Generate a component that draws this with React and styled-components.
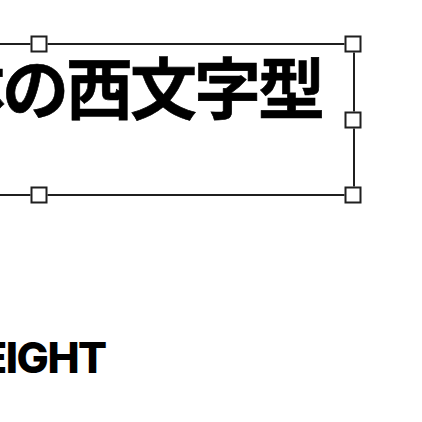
import React from "react";
import styled, { createGlobalStyle } from "styled-components";

const GlobalStyle = createGlobalStyle`
  html, body {
    margin: 0;
    padding: 0;
    background: #ffffff;
    overflow: hidden;
  }
`;

const Page = styled.div`
  width: 422px;
  height: 422px;
  overflow: hidden;
  display: flex;
  flex-direction: column;
  align-items: flex-start;
  padding-top: 43px;
  box-sizing: border-box;
`;

const Frame = styled.div`
  position: relative;
  flex-shrink: 0;
  box-sizing: border-box;
  width: 632px;
  height: 153px;
  margin-left: -277px;
  border: 2px solid #1f1f1f;
  display: flex;
  justify-content: flex-end;
  align-items: flex-start;
  padding: 6px 31px 0 0;
`;

const Handle = styled.span`
  position: absolute;
  width: 13px;
  height: 13px;
  background: #ffffff;
  border: 2px solid #1f1f1f;
  left: ${({ $x }) => $x};
  top: ${({ $y }) => $y};
  transform: translate(-50%, -50%);
`;

const Sample = styled.div`
  font-family: "Noto Sans CJK JP", "Noto Sans", sans-serif;
  font-weight: 700;
  font-size: 67px;
  letter-spacing: -3px;
  line-height: 1;
  color: #000000;
  white-space: nowrap;
  -webkit-text-stroke: 0.6px #000000;
`;

const Caption = styled.div`
  margin-top: 140px;
  margin-left: -63px;
  font-family: Inter, "Liberation Sans", sans-serif;
  font-weight: 800;
  font-size: 43px;
  letter-spacing: -1.5px;
  line-height: 1;
  color: #000000;
  white-space: nowrap;
`;

const handles = [
  ["50%", "-1px"],
  ["100%", "-1px"],
  ["100%", "50%"],
  ["50%", "calc(100% + 1px)"],
  ["100%", "calc(100% + 1px)"],
];

export default function App() {
  return (
    <>
      <GlobalStyle />
      <Page>
        <Frame>
          <Sample>書体の西文字型</Sample>
          {handles.map(([x, y], i) => (
            <Handle key={i} $x={x} $y={y} />
          ))}
        </Frame>
        <Caption>WEIGHT</Caption>
      </Page>
    </>
  );
}
